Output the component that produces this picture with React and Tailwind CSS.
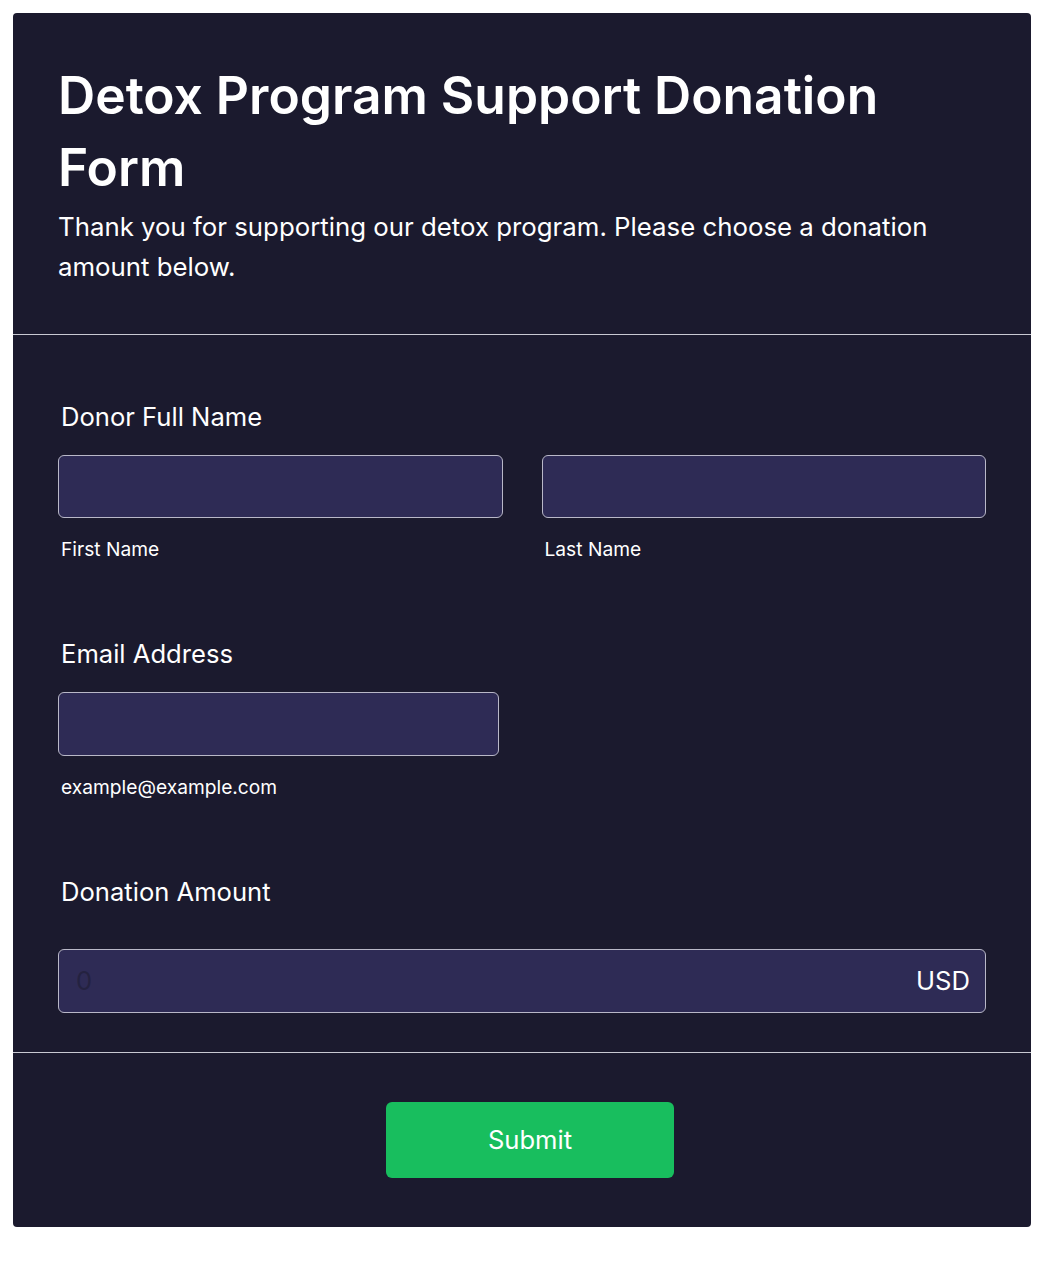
import React from "react";

export default function App() {
  const font = { fontFamily: "Inter, 'Noto Sans', sans-serif" };
  return (
    <div className="min-h-[1285px] bg-white pt-[13px] px-[13px]" style={font}>
      <div className="w-[1018px] rounded-[4px] bg-[#1b1a2e] text-white overflow-hidden">
        <div className="px-[45px] pt-[46px] pb-[47px] border-b border-[#c9c9d2]">
          <h1 className="text-[51.5px] leading-[72px] font-semibold">Detox Program Support Donation Form</h1>
          <p className="text-[25.8px] leading-[40px] mt-[4px]">Thank you for supporting our detox program. Please choose a donation amount below.</p>
        </div>
        <div className="px-[45px] pt-[64px] pb-[39px] border-b border-[#c9c9d2]">
          <div className="pl-[3px] text-[25.6px] leading-[36px]">Donor Full Name</div>
          <div className="mt-[20px] flex gap-[39px]">
            <div className="flex-1">
              <input className="block w-full h-[63px] rounded-[6px] border border-[#b9b8c8] bg-[#2e2b55] outline-none" />
              <div className="pl-[3px] mt-[17px] text-[19.2px] leading-[28px]">First Name</div>
            </div>
            <div className="flex-1">
              <input className="block w-full h-[63px] rounded-[6px] border border-[#b9b8c8] bg-[#2e2b55] outline-none" />
              <div className="pl-[3px] mt-[17px] text-[19.2px] leading-[28px]">Last Name</div>
            </div>
          </div>
          <div className="mt-[73px] pl-[3px] text-[25.6px] leading-[36px]">Email Address</div>
          <input className="block mt-[20px] w-[441px] h-[64px] rounded-[6px] border border-[#b9b8c8] bg-[#2e2b55] outline-none" />
          <div className="pl-[3px] mt-[17px] text-[19.2px] leading-[28px]">example@example.com</div>
          <div className="mt-[73px] pl-[3px] text-[25.6px] leading-[36px]">Donation Amount</div>
          <div className="mt-[39px] h-[64px] rounded-[6px] border border-[#b9b8c8] bg-[#2e2b55] flex items-center justify-between pl-[17px] pr-[15px]">
            <span className="text-[25.6px] text-[#242240]">0</span>
            <span className="text-[25.6px]">USD</span>
          </div>
        </div>
        <div className="py-[49px] pl-[16px] flex justify-center">
          <button className="w-[288px] h-[76px] rounded-[6px] bg-[#18be5e] text-[25.6px] font-normal text-white">Submit</button>
        </div>
      </div>
    </div>
  );
}
